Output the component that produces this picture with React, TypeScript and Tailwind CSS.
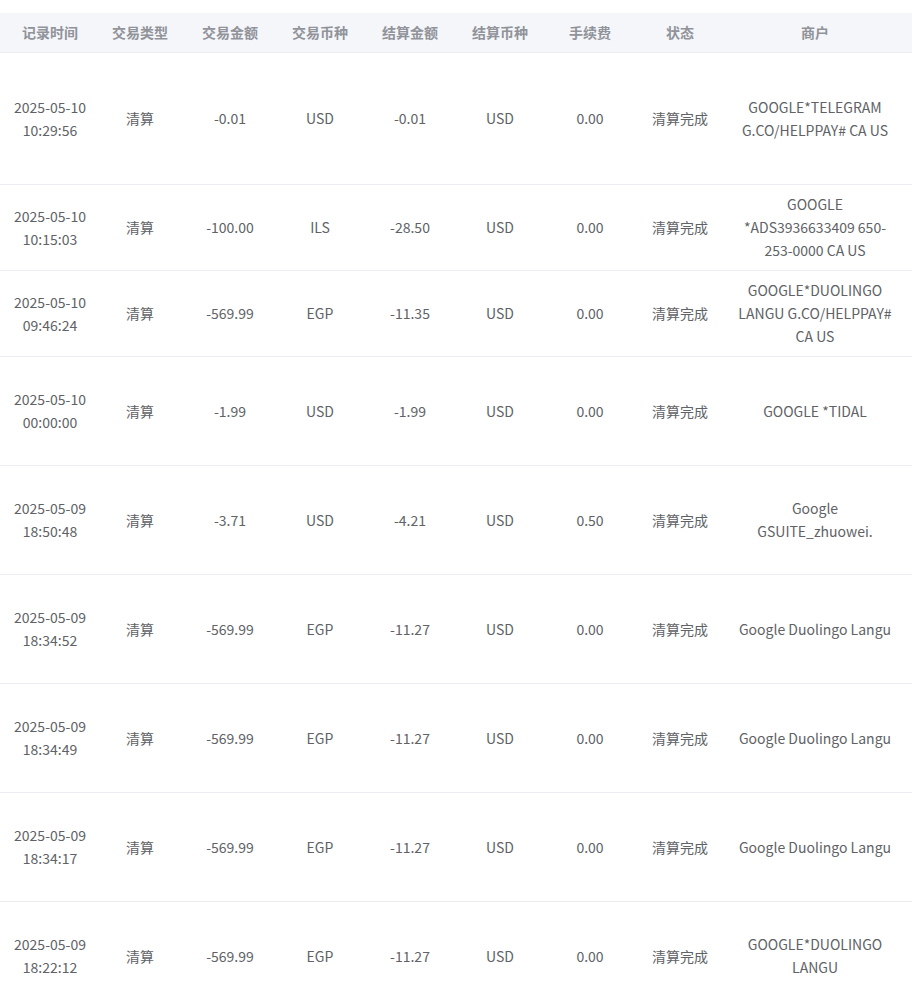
const headers = ['记录时间', '交易类型', '交易金额', '交易币种', '结算金额', '结算币种', '手续费', '状态', '商户'];

type Row = {
  date: string;
  time: string;
  amount: string;
  currency: string;
  settle: string;
  settleCurrency: string;
  fee: string;
  merchant: string[];
  h: string;
};

const rows: Row[] = [
  { date: '2025-05-10', time: '10:29:56', amount: '-0.01', currency: 'USD', settle: '-0.01', settleCurrency: 'USD', fee: '0.00', merchant: ['GOOGLE*TELEGRAM', 'G.CO/HELPPAY# CA US'], h: 'h-[132px]' },
  { date: '2025-05-10', time: '10:15:03', amount: '-100.00', currency: 'ILS', settle: '-28.50', settleCurrency: 'USD', fee: '0.00', merchant: ['GOOGLE', '*ADS3936633409 650-', '253-0000 CA US'], h: 'h-[86px]' },
  { date: '2025-05-10', time: '09:46:24', amount: '-569.99', currency: 'EGP', settle: '-11.35', settleCurrency: 'USD', fee: '0.00', merchant: ['GOOGLE*DUOLINGO', 'LANGU G.CO/HELPPAY#', 'CA US'], h: 'h-[86px]' },
  { date: '2025-05-10', time: '00:00:00', amount: '-1.99', currency: 'USD', settle: '-1.99', settleCurrency: 'USD', fee: '0.00', merchant: ['GOOGLE *TIDAL'], h: 'h-[109px]' },
  { date: '2025-05-09', time: '18:50:48', amount: '-3.71', currency: 'USD', settle: '-4.21', settleCurrency: 'USD', fee: '0.50', merchant: ['Google', 'GSUITE_zhuowei.'], h: 'h-[109px]' },
  { date: '2025-05-09', time: '18:34:52', amount: '-569.99', currency: 'EGP', settle: '-11.27', settleCurrency: 'USD', fee: '0.00', merchant: ['Google Duolingo Langu'], h: 'h-[109px]' },
  { date: '2025-05-09', time: '18:34:49', amount: '-569.99', currency: 'EGP', settle: '-11.27', settleCurrency: 'USD', fee: '0.00', merchant: ['Google Duolingo Langu'], h: 'h-[109px]' },
  { date: '2025-05-09', time: '18:34:17', amount: '-569.99', currency: 'EGP', settle: '-11.27', settleCurrency: 'USD', fee: '0.00', merchant: ['Google Duolingo Langu'], h: 'h-[109px]' },
  { date: '2025-05-09', time: '18:22:12', amount: '-569.99', currency: 'EGP', settle: '-11.27', settleCurrency: 'USD', fee: '0.00', merchant: ['GOOGLE*DUOLINGO', 'LANGU'], h: 'h-[109px]' },
];

const grid = 'grid grid-cols-[90px_90px_90px_90px_90px_90px_90px_90px_180px] pl-[5px]';

const Cell = ({ children }: { children: React.ReactNode }) => (
  <div className="flex flex-col items-center justify-center text-center">{children}</div>
);

export default function App() {
  return (
    <div className="w-[912px] h-[998px] overflow-hidden bg-white pt-[13px] font-['Noto_Sans_CJK_SC','Noto_Sans',sans-serif] text-[14px] leading-[23px]">
      {/* header */}
      <div className={`${grid} h-[40px] bg-[#f5f6fa] border-b border-[#ebedf3] text-[#909399] font-bold`}>
        {headers.map((h) => (
          <Cell key={h}>{h}</Cell>
        ))}
      </div>

      {/* body */}
      {rows.map((r, i) => (
        <div key={i} className={`${grid} ${r.h} border-b border-[#ebedf3] text-[#606266]`}>
          <Cell>
            <span>{r.date}</span>
            <span>{r.time}</span>
          </Cell>
          <Cell>清算</Cell>
          <Cell>{r.amount}</Cell>
          <Cell>{r.currency}</Cell>
          <Cell>{r.settle}</Cell>
          <Cell>{r.settleCurrency}</Cell>
          <Cell>{r.fee}</Cell>
          <Cell>清算完成</Cell>
          <Cell>
            {r.merchant.map((m) => (
              <span key={m}>{m}</span>
            ))}
          </Cell>
        </div>
      ))}
    </div>
  );
}
